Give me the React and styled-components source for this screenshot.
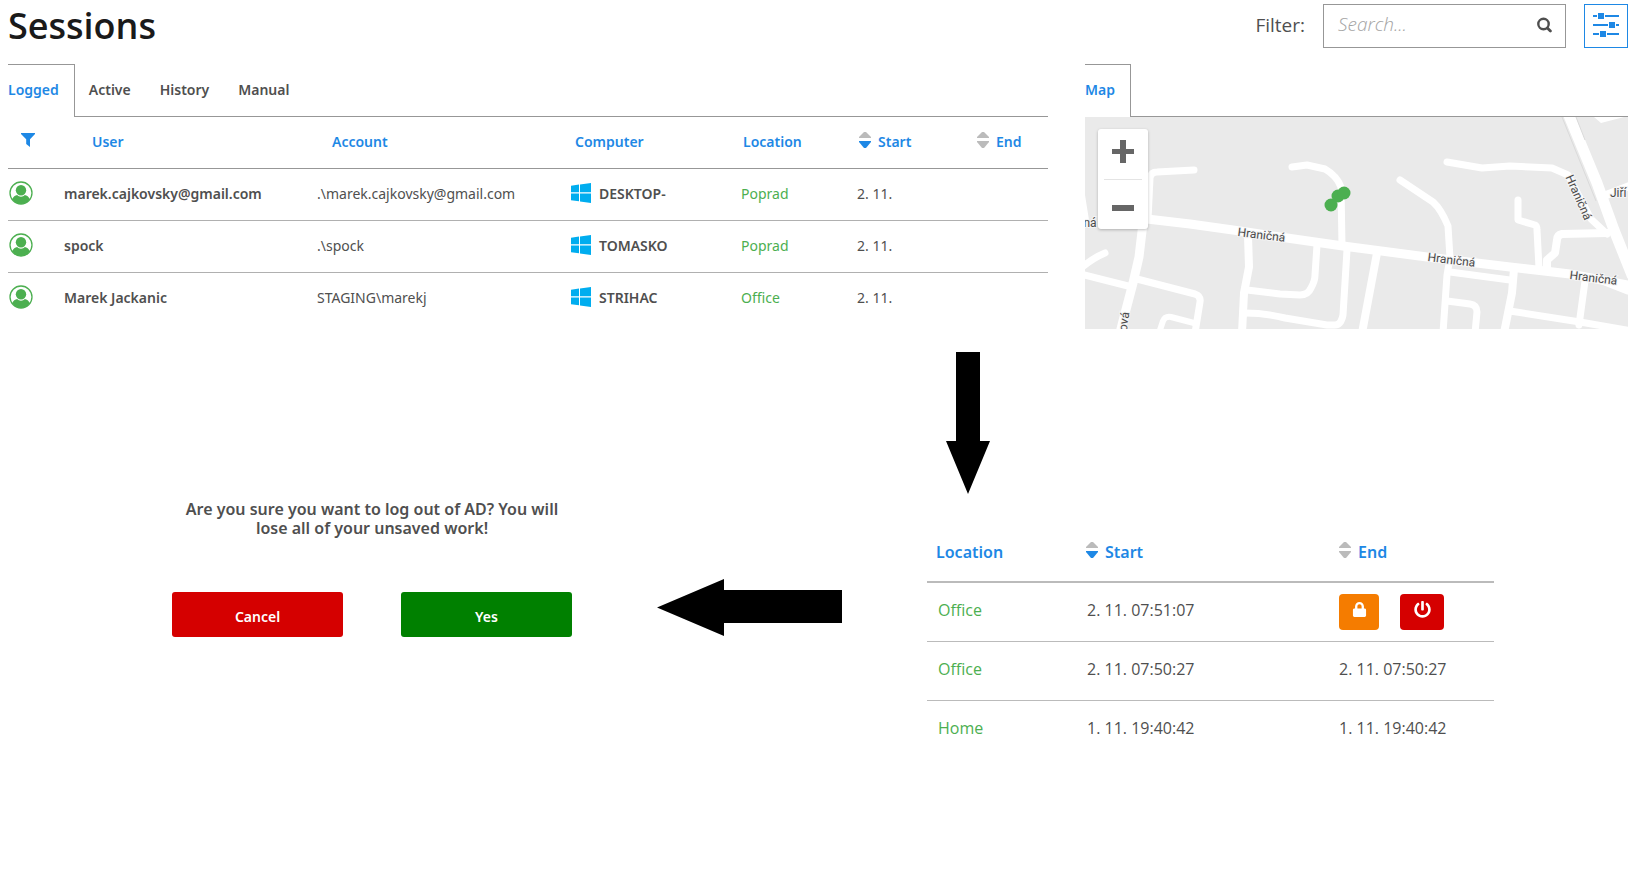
import React from "react";
import styled, { createGlobalStyle } from "styled-components";
import { FaLock, FaPowerOff } from "react-icons/fa";

const BLUE = "#1e88e5";
const GREEN = "#4caf50";
const LINE = "#979797";

const GlobalStyle = createGlobalStyle`
  * { box-sizing: border-box; }
  body {
    margin: 0;
    background: #fff;
    color: #4f4f4f;
    font-family: "Noto Sans", "Open Sans", sans-serif;
    font-size: 14px;
    line-height: 20px;
  }
  svg { display: block; }
`;

const Page = styled.div`
  padding: 4px 16px 0 8px;
`;

const Header = styled.header`
  display: flex;
  justify-content: space-between;
  height: 60px;
  font-family: "Open Sans", "Noto Sans", sans-serif;
`;

const Title = styled.h1`
  margin: 0;
  font-size: 36px;
  line-height: 44px;
  font-weight: 600;
  color: #1a1a1a;
`;

const FilterBar = styled.form`
  display: flex;
  align-items: center;
  gap: 18px;
  height: 44px;
`;

const FilterLabel = styled.label`
  font-size: 19px;
  line-height: 40px;
  padding-bottom: 2px;
`;

const SearchBox = styled.div`
  display: flex;
  align-items: center;
  width: 243px;
  height: 44px;
  padding: 0 13px 0 14px;
  border: 1px solid ${LINE};
`;

const SearchInput = styled.input`
  flex: 1;
  min-width: 0;
  padding: 0 0 4px;
  border: 0;
  outline: 0;
  background: none;
  font: inherit;
  font-size: 19px;
  color: #4f4f4f;
  &::placeholder {
    color: #a3a3a3;
    font-style: italic;
    font-weight: 300;
    opacity: 1;
  }
`;

const PlainButton = styled.button`
  display: flex;
  align-items: center;
  gap: 7px;
  padding: 0;
  border: 0;
  background: none;
  color: inherit;
  font: inherit;
  cursor: pointer;
`;

const SearchButton = styled(PlainButton)`
  padding-bottom: 2px;
`;

const SettingsButton = styled(PlainButton)`
  justify-content: center;
  width: 44px;
  height: 44px;
  padding-bottom: 2px;
  border: 1px solid ${BLUE};
  color: ${BLUE};
`;

const Panels = styled.main`
  display: grid;
  grid-template-columns: 1040fr 543fr;
  gap: 37px;
`;

const Tabs = styled.div`
  display: flex;
  height: 53px;
`;

const Tab = styled.button`
  padding: 0 15px 0 14px;
  border: solid ${LINE};
  border-width: 0 0 1px;
  background: none;
  font: inherit;
  font-weight: 600;
  color: inherit;
  cursor: pointer;
  &[aria-selected="true"] {
    padding: 0 15px 2px 0;
    border-width: 1px 1px 0 0;
    color: ${BLUE};
  }
`;

const TabFill = styled.div`
  flex: 1;
  border-bottom: 1px solid ${LINE};
`;

const SessionTable = styled.table`
  width: 100%;
  table-layout: fixed;
  border-collapse: collapse;
`;

const HeadCell = styled.th`
  height: 51px;
  padding: 0 0 0 ${(p) => p.$indent || 2}px;
  border-bottom: 1px solid ${LINE};
  text-align: left;
  font-weight: 600;
  color: ${BLUE};
`;

const IconHeadCell = styled(HeadCell)`
  padding-bottom: 4px;
`;

const Cell = styled.td`
  height: 52px;
  padding: 0;
  border-bottom: 1px solid #b0b0b0;
  white-space: nowrap;
  font-weight: ${(p) => (p.$strong ? 600 : 400)};
  tr:last-child > & { border-bottom: 0; }
`;

const AvatarCell = styled(Cell)`
  padding: 0 0 2px 1px;
`;

const PlaceLink = styled.a`
  color: ${GREEN};
  text-decoration: none;
`;

const Device = styled.span`
  display: flex;
  align-items: center;
  gap: 8px;
`;

const MapFrame = styled.div`
  position: relative;
  height: 212px;
  background: #eaeaea;
  overflow: hidden;
`;

const ZoomBox = styled.div`
  position: absolute;
  top: 12px;
  left: 13px;
  width: 50px;
  border-radius: 3px;
  background: #fff;
  box-shadow: 0 1px 3px rgba(0, 0, 0, 0.25);
`;

const ZoomButton = styled(PlainButton)`
  justify-content: center;
  width: 38px;
  height: 50px;
  margin: 0 6px;
  padding-bottom: 5px;
  & + & {
    padding: 6px 0 0;
    border-top: 1px solid #e4e4e4;
  }
`;

const Flow = styled.section`
  display: flex;
  align-items: flex-start;
  justify-content: space-between;
  padding: 23px 134px 0 164px;
`;

const Dialog = styled.div`
  width: 400px;
  padding-top: 148px;
`;

const Question = styled.p`
  margin: 0;
  font-size: 16px;
  line-height: 19px;
  font-weight: 600;
  text-align: center;
`;

const Choices = styled.div`
  display: flex;
  gap: 58px;
  margin-top: 54px;
`;

const Choice = styled.button`
  flex: 1;
  height: 45px;
  padding: 4px 0 0;
  border: 0;
  border-radius: 3px;
  background: ${(p) => p.$color};
  color: #fff;
  font: inherit;
  font-weight: 600;
  cursor: pointer;
`;

const LeftArrow = styled.svg`
  margin-top: 227px;
`;

const DetailColumn = styled.div`
  width: 567px;
`;

const DownArrow = styled.svg`
  margin: 0 0 28px 19px;
`;

const DetailTable = styled(SessionTable)`
  font-size: 16px;
`;

const DetailHead = styled(HeadCell)`
  height: 60px;
  border-bottom: 2px solid #bbb;
`;

const DetailCell = styled(Cell)`
  height: 59px;
  padding: 0 0 4px ${(p) => p.$indent || 0}px;
  border-color: #bbb;
  font-family: "Open Sans", "Noto Sans", sans-serif;
`;

const Actions = styled.div`
  display: flex;
  gap: 21px;
  padding-top: 4px;
`;

const ActionButton = styled(PlainButton)`
  justify-content: center;
  width: ${(p) => p.$width}px;
  height: 36px;
  padding-bottom: 4px;
  border-radius: 4px;
  background: ${(p) => p.$color};
  color: #fff;
`;

const FilterIcon = () => (
  <svg width="14" height="14" viewBox="0 0 14 14" fill={BLUE}>
    <path d="M0 0h14v1L9 6.300V14L5.200 11V6.300L0 1z" />
  </svg>
);

const SearchIcon = () => (
  <svg width="16" height="16" viewBox="0 0 16 16" fill="none" stroke="#4f4f4f">
    <circle cx="7.500" cy="7" r="5.200" strokeWidth="2.400" />
    <path d="M11.400 11l3 3" strokeWidth="2.800" strokeLinecap="round" />
  </svg>
);

const SlidersIcon = () => (
  <svg width="28" height="26" viewBox="0 0 28 26" fill={BLUE}>
    <path d="M1 3h4v2H1zM13 3h14v2H13zM1 12h15v2H1zM24 12h3v2h-3zM1 21h6v2H1zM15 21h12v2H15z" />
    <rect x="6" y="1" width="6" height="6" />
    <rect x="17" y="10" width="6" height="6" />
    <rect x="8" y="19" width="6" height="6" />
  </svg>
);

const AvatarIcon = () => (
  <svg width="24" height="24" viewBox="0 0 24 24" role="img" aria-label="Logged in">
    <circle cx="12" cy="12" r="11" fill="#fff" stroke={GREEN} strokeWidth="1.300" />
    <path d="M3.300 18.200C4.300 15.400 6 14.300 8.200 14c1 1.100 2.300 1.700 3.800 1.700s2.800-.6 3.800-1.700c2.200.3 3.900 1.400 4.900 4.200A11 11 0 0 1 12 23a11 11 0 0 1-8.700-4.800z" fill={GREEN} />
    <circle cx="12" cy="9.300" r="5.200" fill={GREEN} />
  </svg>
);

const WindowsIcon = () => (
  <svg width="20" height="22" viewBox="0 0 20 22" fill="#00adef" aria-hidden="true">
    <path d="M0 2.800L8 1.600V9.300H0zM9 1.500L20 0V9.300H9zM0 10.500H8V18.300L0 17.200zM9 10.500H20V20L9 18.500z" />
  </svg>
);

const SortIcon = ({ active }) => (
  <svg width="12" height="20" viewBox="0 0 12 20" aria-hidden="true">
    <path d="M5 0h2l5 5v1H0V5z" fill="#bbb" />
    <path d="M0 9h12v1l-5 6H5L0 10z" fill={active ? BLUE : "#bbb"} />
  </svg>
);

const ZOOM_COLOR = "#666";
const PlusIcon = () => (
  <svg width="22" height="23" viewBox="0 0 22 23" fill={ZOOM_COLOR}>
    <path d="M8 0h6v9h8v5h-8v9H8v-9H0V9h8z" />
  </svg>
);
const MinusIcon = () => (
  <svg width="22" height="6" viewBox="0 0 22 6" fill={ZOOM_COLOR}>
    <path d="M0 0h22v6H0z" />
  </svg>
);

const ROADS = [
  [9, "M62 102L105 107L155 114L202 121L258 129L342 140L425 150L485 157L543 168"],
  [9, "M515 162L543 173"],
  [7, "M63 102L65 61Q66 55 72 55L109 53"],
  [9, "M58 106L54 140L48 166L38 204L35 216"],
  [7, "M-4 157L47 170M52 162L110 177Q116 179 115 185L110 216"],
  [7, "M-4 151Q8 141 20 136"],
  [6, "M74 216L78 204Q80 199 86 200L109 206"],
  [8, "M163 119L164 150L159 176L157 216"],
  [7, "M162 173L195 177L215 178Q223 178 226 171Q230 164 230 158L232 128"],
  [7, "M160 196Q180 196 200 201L242 208H250Q256 208 258 198L262 133"],
  [7, "M207 50L222 48L240 52Q252 59 256 70L257 129"],
  [8, "M277 216L292 136"],
  [7, "M315 63L348 85Q356 92 363 109L365 141L362 158L358 216"],
  [7, "M362 45L397 51L425 49L467 51L483 58L506 102L522 117"],
  [11, "M483 -4L512 66L529 113L547 158"],
  [7, "M433 83V103L450 108Q452 109 452 113L454 151"],
  [8, "M522 116L477 117Q472 118 472 123L470 136L462 143V153"],
  [7, "M365 155L425 163"],
  [8, "M429 152L427 176L419 216"],
  [7, "M362 184L385 187Q392 188 392 195L390 216"],
  [7, "M425 194L495 205L547 214"],
  [7, "M500 164L494 208"],
  [8, "M516 80L547 68"],
];

const MARKERS = [[246, 88], [253, 79], [259, 76]];

const MapView = () => (
  <svg width="100%" height="212" viewBox="0 0 543 212" preserveAspectRatio="xMinYMin slice" role="img" aria-label="Map of session locations">
    <rect width="543" height="212" fill="#eaeaea" />
    <path d="M0 78L4 103H0zM509 0L516 6L543 -1z" fill="#fff" />
    <g fill="none" stroke="#fff" strokeLinecap="round" strokeLinejoin="round">
      {ROADS.map(([width, d]) => (
        <path key={d} d={d} strokeWidth={width} />
      ))}
    </g>
    <path d="M477 0L511 84M491 0L500 23" stroke="#dadada" strokeWidth="1" fill="none" />
    <g fontFamily="Roboto, sans-serif" fontSize="12" fill="#4a4a4a" stroke="#f4f4f4" strokeWidth="2" paintOrder="stroke" textAnchor="middle">
      <text transform="translate(176 122) rotate(7)">Hraničná</text>
      <text transform="translate(366 147) rotate(7)">Hraničná</text>
      <text transform="translate(508 165) rotate(7)">Hraničná</text>
      <text transform="translate(490 82) rotate(66)">Hraničná</text>
      <text x="5" y="110">ná</text>
      <text x="525" y="80" textAnchor="start">Jiří</text>
      <text transform="translate(43 205) rotate(-82)">ová</text>
    </g>
    <g fill={GREEN}>
      {MARKERS.map(([x, y]) => (
        <circle key={x} cx={x} cy={y} r="6.500" />
      ))}
    </g>
  </svg>
);

const SESSIONS = [
  { user: "marek.cajkovsky@gmail.com", account: ".\\marek.cajkovsky@gmail.com", computer: "DESKTOP-", location: "Poprad", start: "2. 11." },
  { user: "spock", account: ".\\spock", computer: "TOMASKO", location: "Poprad", start: "2. 11." },
  { user: "Marek Jackanic", account: "STAGING\\marekj", computer: "STRIHAC", location: "Office", start: "2. 11." },
];

const HISTORY = [
  { location: "Office", start: "2. 11. 07:51:07" },
  { location: "Office", start: "2. 11. 07:50:27", end: "2. 11. 07:50:27" },
  { location: "Home", start: "1. 11. 19:40:42", end: "1. 11. 19:40:42" },
];

const COLUMNS = [56, 253, 254, 170, 116, 118, 73];
const DETAIL_COLUMNS = [158, 253, 156];

const Columns = ({ widths }) => (
  <colgroup>
    {widths.map((width, i) => (
      <col key={i} width={width} />
    ))}
  </colgroup>
);

const SortButton = ({ active, children }) => (
  <PlainButton type="button">
    <SortIcon active={active} />
    {children}
  </PlainButton>
);

export default function App() {
  return (
    <>
      <GlobalStyle />
      <Page>
        <Header>
          <Title>Sessions</Title>
          <FilterBar onSubmit={(e) => e.preventDefault()}>
            <FilterLabel htmlFor="session-filter">Filter:</FilterLabel>
            <SearchBox>
              <SearchInput id="session-filter" type="text" placeholder="Search..." />
              <SearchButton type="submit" aria-label="Search">
                <SearchIcon />
              </SearchButton>
            </SearchBox>
            <SettingsButton type="button" aria-label="Filter settings">
              <SlidersIcon />
            </SettingsButton>
          </FilterBar>
        </Header>

        <Panels>
          <section>
            <Tabs role="tablist">
              <Tab role="tab" aria-selected="true">Logged</Tab>
              <Tab role="tab" aria-selected="false">Active</Tab>
              <Tab role="tab" aria-selected="false">History</Tab>
              <Tab role="tab" aria-selected="false">Manual</Tab>
              <TabFill />
            </Tabs>
            <SessionTable>
              <Columns widths={COLUMNS} />
              <thead>
                <tr>
                  <IconHeadCell $indent={13}>
                    <PlainButton type="button" aria-label="Filter columns">
                      <FilterIcon />
                    </PlainButton>
                  </IconHeadCell>
                  <HeadCell $indent={28}>User</HeadCell>
                  <HeadCell $indent={15}>Account</HeadCell>
                  <HeadCell $indent={4}>Computer</HeadCell>
                  <HeadCell>Location</HeadCell>
                  <HeadCell><SortButton active>Start</SortButton></HeadCell>
                  <HeadCell><SortButton>End</SortButton></HeadCell>
                </tr>
              </thead>
              <tbody>
                {SESSIONS.map((s) => (
                  <tr key={s.user}>
                    <AvatarCell><AvatarIcon /></AvatarCell>
                    <Cell $strong>{s.user}</Cell>
                    <Cell>{s.account}</Cell>
                    <Cell $strong>
                      <Device><WindowsIcon />{s.computer}</Device>
                    </Cell>
                    <Cell><PlaceLink href="#map">{s.location}</PlaceLink></Cell>
                    <Cell>{s.start}</Cell>
                    <Cell />
                  </tr>
                ))}
              </tbody>
            </SessionTable>
          </section>

          <section id="map">
            <Tabs role="tablist">
              <Tab role="tab" aria-selected="true">Map</Tab>
              <TabFill />
            </Tabs>
            <MapFrame>
              <MapView />
              <ZoomBox>
                <ZoomButton type="button" aria-label="Zoom in"><PlusIcon /></ZoomButton>
                <ZoomButton type="button" aria-label="Zoom out"><MinusIcon /></ZoomButton>
              </ZoomBox>
            </MapFrame>
          </section>
        </Panels>

        <Flow>
          <Dialog role="dialog" aria-labelledby="logout-question">
            <Question id="logout-question">
              Are you sure you want to log out of AD? You will<br />lose all of your unsaved work!
            </Question>
            <Choices>
              <Choice type="button" $color="#d50000">Cancel</Choice>
              <Choice type="button" $color="#008000">Yes</Choice>
            </Choices>
          </Dialog>

          <LeftArrow width="188" height="57" viewBox="0 0 188 57" aria-hidden="true">
            <path d="M1 28.500L68 0V11H186V44H68V57z" />
          </LeftArrow>

          <DetailColumn>
            <DownArrow width="44" height="142" viewBox="0 0 44 142" aria-hidden="true">
              <path d="M10 0H34V89H44L22 142L0 89H10z" />
            </DownArrow>
            <DetailTable>
              <Columns widths={DETAIL_COLUMNS} />
              <thead>
                <tr>
                  <DetailHead $indent={9}>Location</DetailHead>
                  <DetailHead $indent={1}><SortButton active>Start</SortButton></DetailHead>
                  <DetailHead $indent={1}><SortButton>End</SortButton></DetailHead>
                </tr>
              </thead>
              <tbody>
                {HISTORY.map((h) => (
                  <tr key={h.start}>
                    <DetailCell $indent={11}><PlaceLink href="#map">{h.location}</PlaceLink></DetailCell>
                    <DetailCell $indent={2}>{h.start}</DetailCell>
                    <DetailCell $indent={1}>
                      {h.end || (
                        <Actions>
                          <ActionButton type="button" aria-label="Lock session" $width={40} $color="#f57c00">
                            <FaLock size={15} />
                          </ActionButton>
                          <ActionButton type="button" aria-label="Log out session" $width={44} $color="#d50000">
                            <FaPowerOff size={17} />
                          </ActionButton>
                        </Actions>
                      )}
                    </DetailCell>
                  </tr>
                ))}
              </tbody>
            </DetailTable>
          </DetailColumn>
        </Flow>
      </Page>
    </>
  );
}
